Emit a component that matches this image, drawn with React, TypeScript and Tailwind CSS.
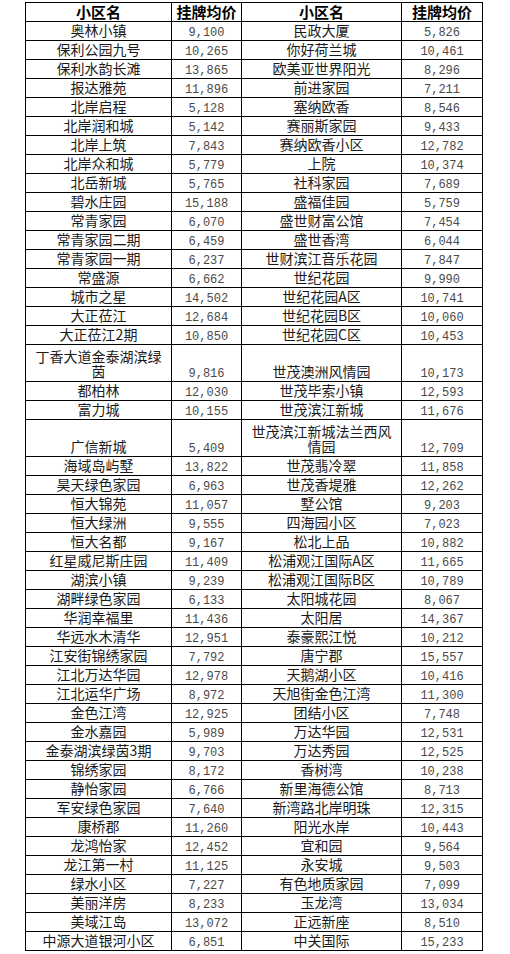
import React from "react";

type Row = { a: React.ReactNode; b: string; c: React.ReactNode; d: string; tall?: boolean };

const rows: Row[] = [
  { a: "奥林小镇", b: "9,100", c: "民政大厦", d: "5,826" },
  { a: "保利公园九号", b: "10,265", c: "你好荷兰城", d: "10,461" },
  { a: "保利水韵长滩", b: "13,865", c: "欧美亚世界阳光", d: "8,296" },
  { a: "报达雅苑", b: "11,896", c: "前进家园", d: "7,211" },
  { a: "北岸启程", b: "5,128", c: "塞纳欧香", d: "8,546" },
  { a: "北岸润和城", b: "5,142", c: "赛丽斯家园", d: "9,433" },
  { a: "北岸上筑", b: "7,843", c: "赛纳欧香小区", d: "12,782" },
  { a: "北岸众和城", b: "5,779", c: "上院", d: "10,374" },
  { a: "北岳新城", b: "5,765", c: "社科家园", d: "7,689" },
  { a: "碧水庄园", b: "15,188", c: "盛福佳园", d: "5,759" },
  { a: "常青家园", b: "6,070", c: "盛世财富公馆", d: "7,454" },
  { a: "常青家园二期", b: "6,459", c: "盛世香湾", d: "6,044" },
  { a: "常青家园一期", b: "6,237", c: "世财滨江音乐花园", d: "7,847" },
  { a: "常盛源", b: "6,662", c: "世纪花园", d: "9,990" },
  { a: "城市之星", b: "14,502", c: "世纪花园A区", d: "10,741" },
  { a: "大正莅江", b: "12,684", c: "世纪花园B区", d: "10,060" },
  { a: "大正莅江2期", b: "10,850", c: "世纪花园C区", d: "10,453" },
  {
    a: (
      <>
        丁香大道金泰湖滨绿
        <br />
        茵
      </>
    ),
    b: "9,816",
    c: "世茂澳洲风情园",
    d: "10,173",
    tall: true,
  },
  { a: "都柏林", b: "12,030", c: "世茂毕索小镇", d: "12,593" },
  { a: "富力城", b: "10,155", c: "世茂滨江新城", d: "11,676" },
  {
    a: "广信新城",
    b: "5,409",
    c: (
      <>
        世茂滨江新城法兰西风
        <br />
        情园
      </>
    ),
    d: "12,709",
    tall: true,
  },
  { a: "海域岛屿墅", b: "13,822", c: "世茂翡冷翠", d: "11,858" },
  { a: "昊天绿色家园", b: "6,963", c: "世茂香堤雅", d: "12,262" },
  { a: "恒大锦苑", b: "11,057", c: "墅公馆", d: "9,203" },
  { a: "恒大绿洲", b: "9,555", c: "四海园小区", d: "7,023" },
  { a: "恒大名都", b: "9,167", c: "松北上品", d: "10,882" },
  { a: "红星威尼斯庄园", b: "11,409", c: "松浦观江国际A区", d: "11,665" },
  { a: "湖滨小镇", b: "9,239", c: "松浦观江国际B区", d: "10,789" },
  { a: "湖畔绿色家园", b: "6,133", c: "太阳城花园", d: "8,067" },
  { a: "华润幸福里", b: "11,436", c: "太阳居", d: "14,367" },
  { a: "华远水木清华", b: "12,951", c: "泰豪熙江悦", d: "10,212" },
  { a: "江安街锦绣家园", b: "7,792", c: "唐宁郡", d: "15,557" },
  { a: "江北万达华园", b: "12,978", c: "天鹅湖小区", d: "10,416" },
  { a: "江北运华广场", b: "8,972", c: "天旭街金色江湾", d: "11,300" },
  { a: "金色江湾", b: "12,925", c: "团结小区", d: "7,748" },
  { a: "金水嘉园", b: "5,989", c: "万达华园", d: "12,531" },
  { a: "金泰湖滨绿茵3期", b: "9,703", c: "万达秀园", d: "12,525" },
  { a: "锦绣家园", b: "8,172", c: "香树湾", d: "10,238" },
  { a: "静怡家园", b: "6,766", c: "新里海德公馆", d: "8,713" },
  { a: "军安绿色家园", b: "7,640", c: "新湾路北岸明珠", d: "12,315" },
  { a: "康桥郡", b: "11,260", c: "阳光水岸", d: "10,443" },
  { a: "龙鸿怡家", b: "12,452", c: "宜和园", d: "9,564" },
  { a: "龙江第一村", b: "11,125", c: "永安城", d: "9,503" },
  { a: "绿水小区", b: "7,227", c: "有色地质家园", d: "7,099" },
  { a: "美丽洋房", b: "8,233", c: "玉龙湾", d: "13,034" },
  { a: "美域江岛", b: "13,072", c: "正远新座", d: "8,510" },
  { a: "中源大道银河小区", b: "6,851", c: "中关国际", d: "15,233" },
];

const cjk = "font-['Noto_Sans_CJK_SC','Noto_Sans',sans-serif]";

function NameCell({ children, tall }: { children: React.ReactNode; tall?: boolean }) {
  return (
    <div
      className={`bg-white flex items-end justify-center text-center ${tall ? "h-[36px]" : "h-[18px]"} pb-[2px] text-[14px] leading-[15px] text-[#1a1a1a] whitespace-nowrap ${cjk}`}
    >
      <span>{children}</span>
    </div>
  );
}

function NumCell({ children, tall }: { children: React.ReactNode; tall?: boolean }) {
  return (
    <div
      className={`bg-white flex items-end justify-center ${tall ? "h-[36px]" : "h-[18px]"} text-[12px] leading-[14px] text-[#4a4a4a] font-['Liberation_Mono',monospace]`}
    >
      <span>{children}</span>
    </div>
  );
}

function HeadCell({ children }: { children: React.ReactNode }) {
  return (
    <div
      className={`bg-white flex items-center justify-center h-[18px] text-[15px] leading-[18px] font-bold text-black ${cjk}`}
    >
      {children}
    </div>
  );
}

export default function App() {
  return (
    <div className="w-[510px] h-[954px] bg-white overflow-hidden pt-[2px] pl-[25px]">
      <div className="grid w-fit grid-cols-[145px_69px_159px_80px] gap-px bg-black p-px">
        <HeadCell>小区名</HeadCell>
        <HeadCell>挂牌均价</HeadCell>
        <HeadCell>小区名</HeadCell>
        <HeadCell>挂牌均价</HeadCell>
        {rows.map((r, i) => (
          <React.Fragment key={i}>
            <NameCell tall={r.tall}>{r.a}</NameCell>
            <NumCell tall={r.tall}>{r.b}</NumCell>
            <NameCell tall={r.tall}>{r.c}</NameCell>
            <NumCell tall={r.tall}>{r.d}</NumCell>
          </React.Fragment>
        ))}
      </div>
    </div>
  );
}
